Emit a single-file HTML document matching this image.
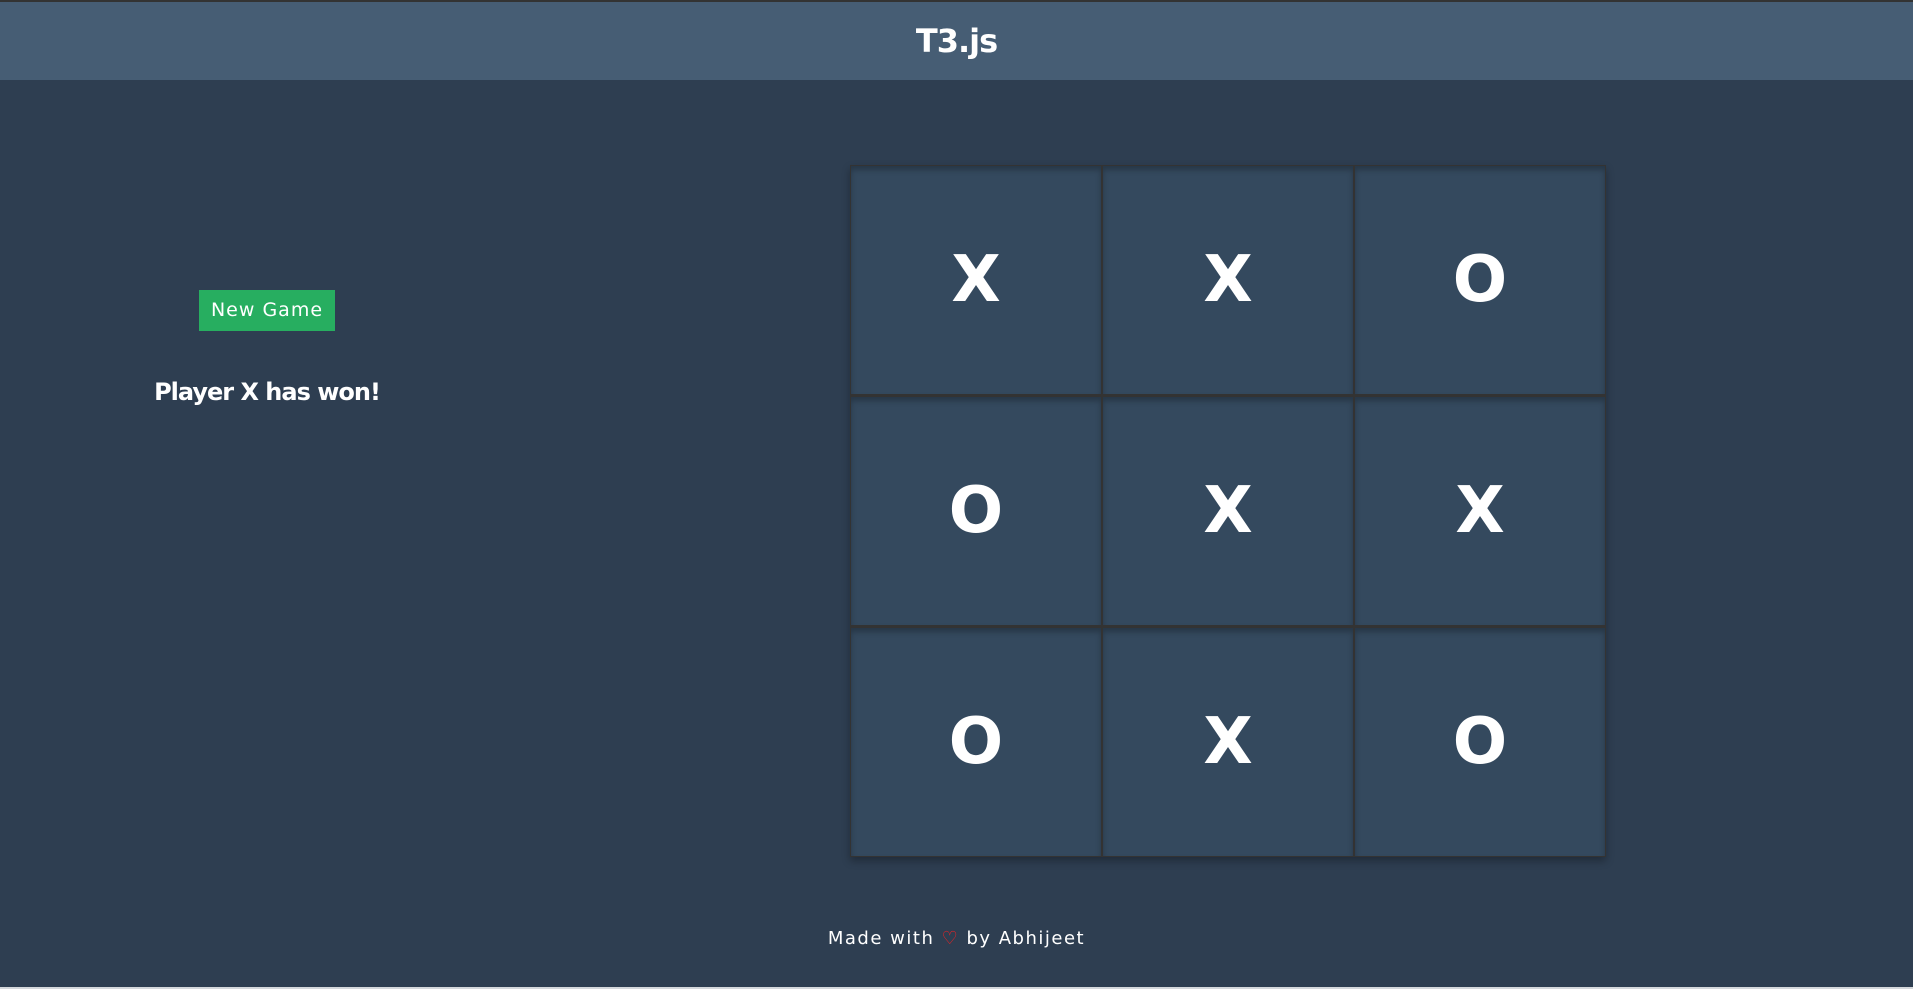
<!DOCTYPE html>
<html><head><style>
html,body{margin:0;padding:0;width:1913px;height:989px;overflow:hidden;background:#2e3e51;font-family:"Comic Sans MS","DejaVu Sans","Liberation Sans",sans-serif;color:#fff}
.hdr{position:absolute;left:0;top:0;width:1913px;height:80px;background:#465d74;border-top:2px solid #333;box-sizing:border-box;text-align:center;font-weight:bold;font-size:32px;line-height:78px;letter-spacing:-1px}
.board{position:absolute;left:850px;top:165px;width:756px;height:692px;background:#333;box-shadow:0 4px 8px rgba(0,0,0,.3)}
.cell{position:absolute;width:250px;height:228px;background:#34495e;box-shadow:inset 0 4px 6px rgba(0,0,0,.25);font-weight:bold;font-size:64px;text-align:center;line-height:228px}
.btn{position:absolute;left:199px;top:290px;width:136px;height:41px;background:#27ae60;font-size:19px;text-align:center;line-height:41px;letter-spacing:1px}
.won{position:absolute;left:100px;width:334px;top:378px;text-align:center;font-weight:bold;font-size:24px;letter-spacing:-1px}
.foot{position:absolute;left:0;width:1913px;top:928px;text-align:center;font-size:18px;letter-spacing:1.5px}
.heart{color:#ff2020;font-family:"DejaVu Sans",sans-serif}
.bot{position:absolute;left:0;top:987px;width:1913px;height:2px;background:#d4d8dc}
</style></head><body>
<div class="hdr">T3.js</div>
<div class="btn">New Game</div>
<div class="won">Player X has won!</div>
<div class="board">
<div class="cell" style="left:1px;top:1px">X</div>
<div class="cell" style="left:253px;top:1px">X</div>
<div class="cell" style="left:505px;top:1px">O</div>
<div class="cell" style="left:1px;top:232px">O</div>
<div class="cell" style="left:253px;top:232px">X</div>
<div class="cell" style="left:505px;top:232px">X</div>
<div class="cell" style="left:1px;top:463px">O</div>
<div class="cell" style="left:253px;top:463px">X</div>
<div class="cell" style="left:505px;top:463px">O</div>
</div>
<div class="foot">Made with <span class="heart">&#9825;&#xFE0E;</span> by Abhijeet</div>
<div class="bot"></div>
</body></html>
